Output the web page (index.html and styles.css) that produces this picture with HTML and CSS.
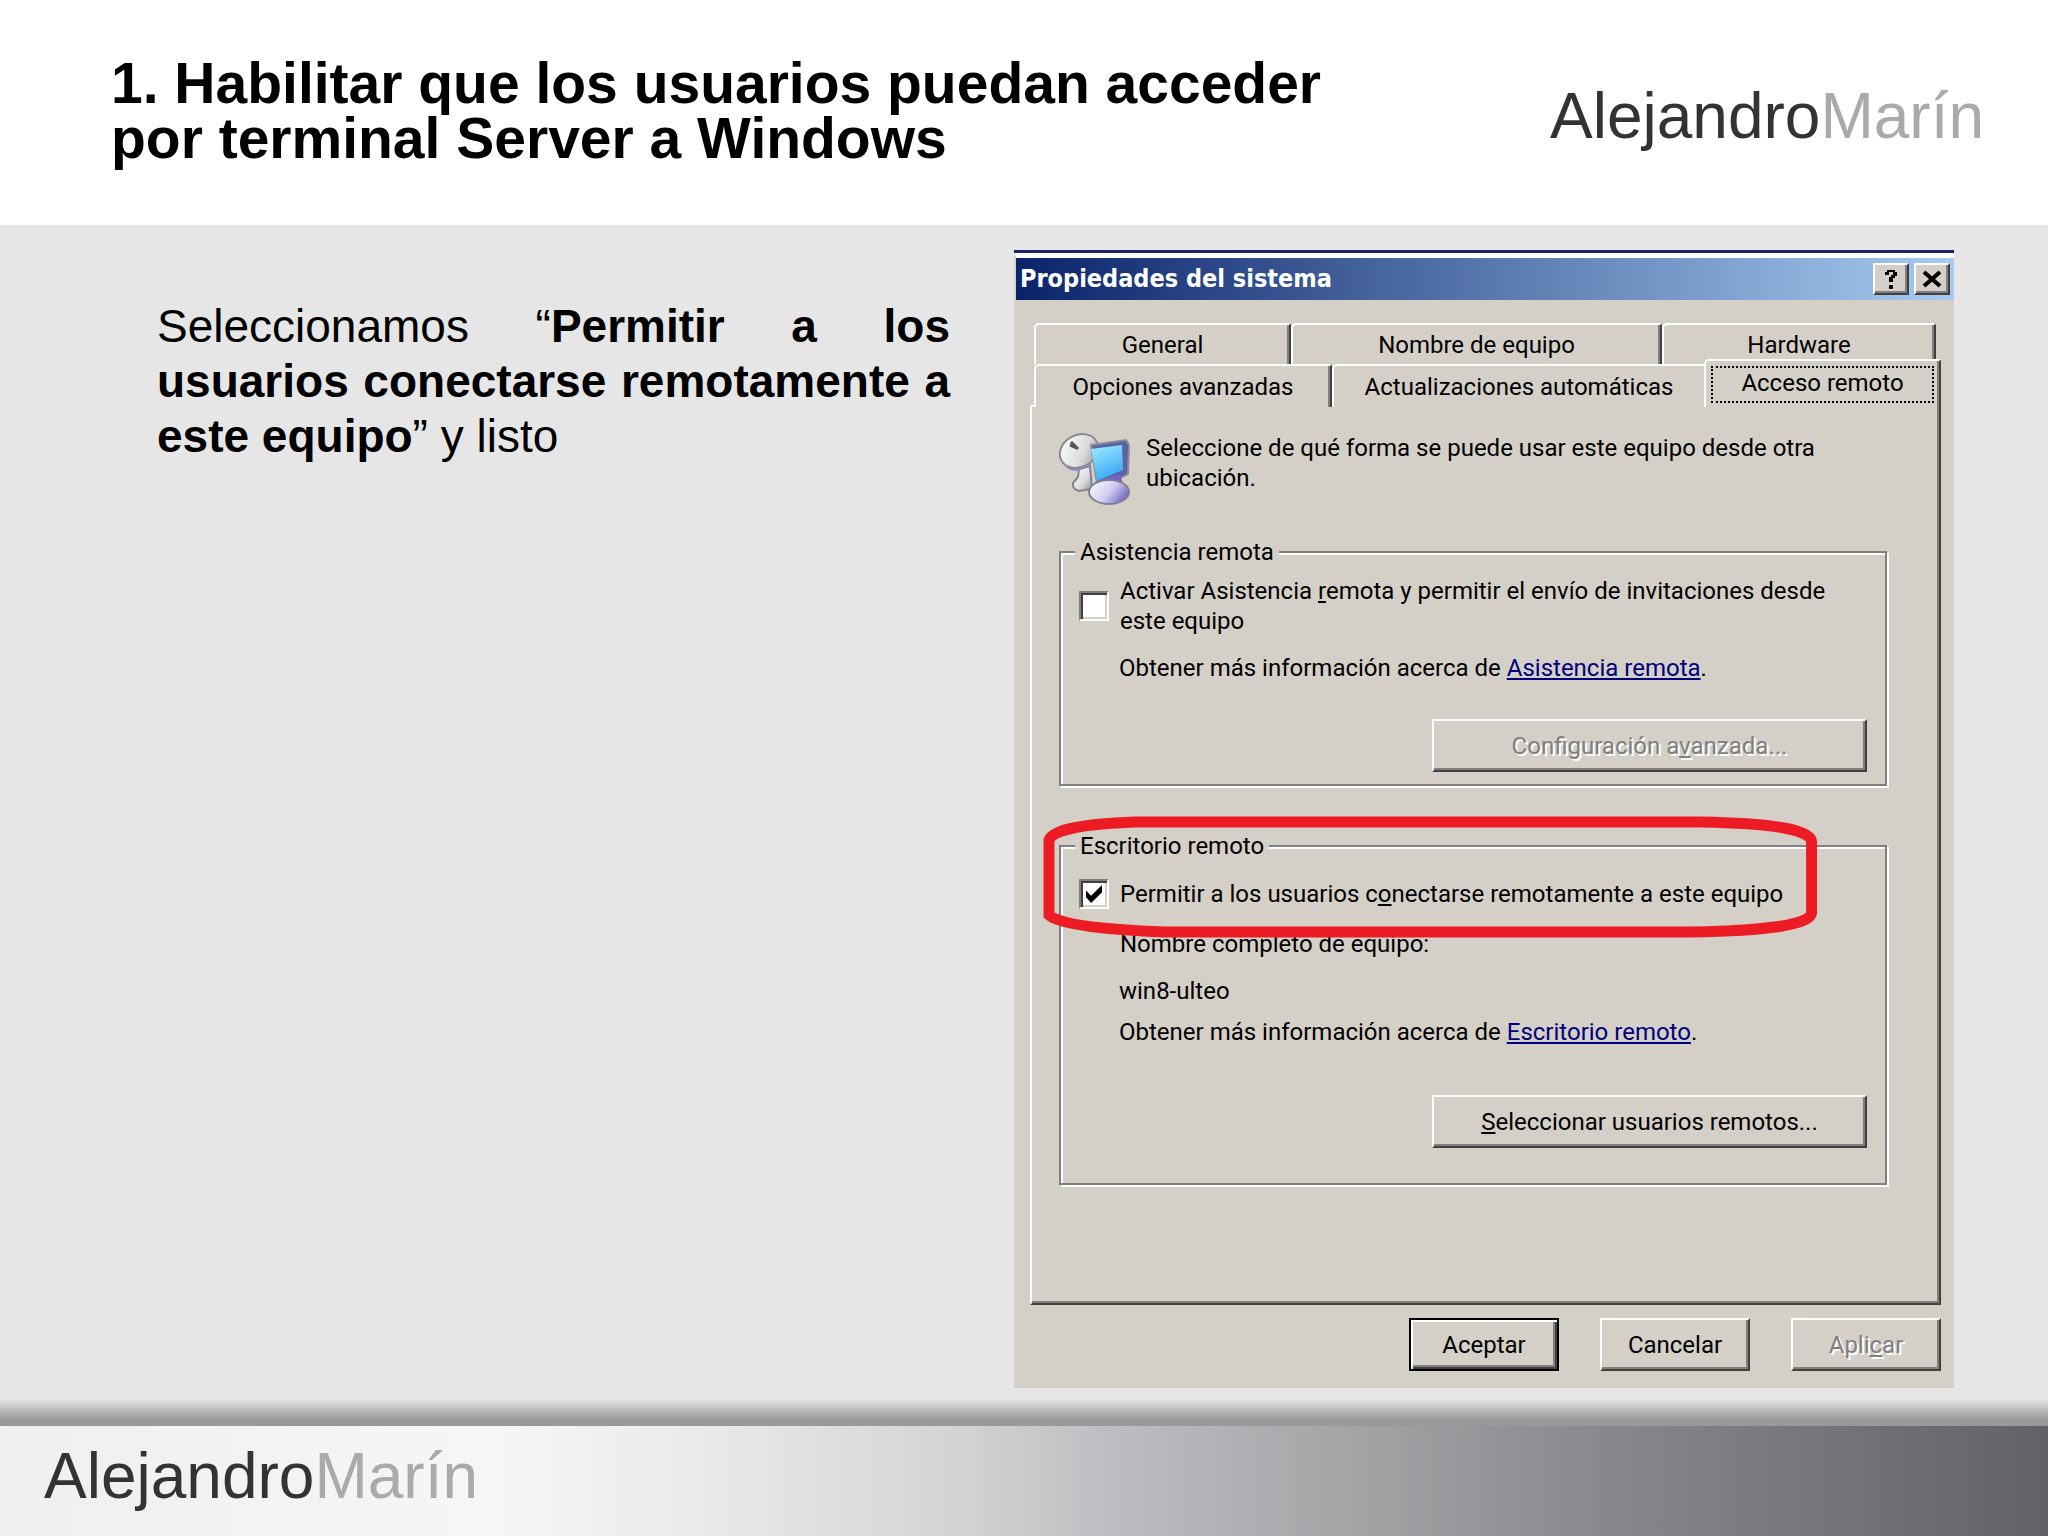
FILE: index.html
```
<!DOCTYPE html>
<html lang="es">
<head>
    <meta charset="UTF-8">
    <meta name="viewport" content="width=device-width, initial-scale=1.0">
    <title>Habilitar acceso por Terminal Server</title>
    <link rel="stylesheet" href="styles.css">
</head>
<body>
    <header class="header">
        <h1>1. Habilitar que los usuarios puedan acceder<br>por terminal Server a Windows</h1>
        <div class="logo">Alejandro<span>Marín</span></div>
    </header>

    <main class="content">
        <p class="text">Seleccionamos “<b>Permitir a los usuarios conectarse remotamente a este equipo</b>” y listo</p>

        <section class="dialog">
            <div class="titlebar">
                <h2>Propiedades del sistema</h2>
                <button class="title-btn" type="button" aria-label="Ayuda">
                    <svg width="16" height="22" viewBox="0 0 16 22"><path d="M2 7V4h2V2h8v2h2v4h-2v2h-2v4H6V9h2V7h2V4H6v3zM6 17h4v4H6z"/></svg>
                </button>
                <button class="title-btn" type="button" aria-label="Cerrar">
                    <svg width="20" height="18" viewBox="0 0 20 18"><path d="M2 2l16 14M18 2L2 16" stroke="#000" stroke-width="4"/></svg>
                </button>
            </div>

            <div class="body">
                <div class="tabs" role="tablist">
                    <div class="tab-row tab-row-back">
                        <button class="tab" type="button" role="tab">General</button>
                        <button class="tab" type="button" role="tab">Nombre de equipo</button>
                        <button class="tab" type="button" role="tab">Hardware</button>
                    </div>
                    <div class="tab-row tab-row-front">
                        <button class="tab" type="button" role="tab">Opciones avanzadas</button>
                        <button class="tab covered" type="button" role="tab">Actualizaciones automáticas</button>
                        <button class="tab active" type="button" role="tab" aria-selected="true"><span>Acceso remoto</span></button>
                    </div>
                </div>

                <div class="panel" role="tabpanel">
                    <div class="intro">
                        <svg class="icon" width="74" height="74" viewBox="0 0 74 74">
                            <defs>
                                <linearGradient id="dish" x1="0" y1="0" x2="1" y2="1">
                                    <stop offset="0" stop-color="#fff"/>
                                    <stop offset="0.6" stop-color="#dcdcdc"/>
                                    <stop offset="1" stop-color="#8e8e9c"/>
                                </linearGradient>
                                <linearGradient id="screen" x1="0" y1="0" x2="0.4" y2="1">
                                    <stop offset="0" stop-color="#a4ecff"/>
                                    <stop offset="1" stop-color="#38aaf4"/>
                                </linearGradient>
                                <linearGradient id="base" x1="0" y1="0" x2="1" y2="0.5">
                                    <stop offset="0" stop-color="#fff"/>
                                    <stop offset="0.6" stop-color="#d2cff0"/>
                                    <stop offset="1" stop-color="#7a74c8"/>
                                </linearGradient>
                            </defs>
                            <path d="M20 36L31 33 33 56 20 58Q13 56 14 50L19 44Z" fill="url(#dish)" stroke="#85838e" stroke-width="2"/>
                            <path d="M4 27Q6 38 17 38L30 34 33 25 20 30Z" fill="#8f89c9"/>
                            <ellipse cx="20" cy="18" rx="20" ry="16" transform="rotate(-28 20 18)" fill="url(#dish)" stroke="#8a8a8e" stroke-width="2"/>
                            <path d="M12 9L19 16M11 12l7 3" stroke="#55555c" stroke-width="3"/>
                            <path d="M32 12L67 7 70 12 69 41 58 47 38 50Z" fill="#5b62a5" stroke="#8b8b98" stroke-width="2"/>
                            <path d="M32 16L63 12 64 37 38 48Z" fill="url(#screen)"/>
                            <path d="M45 45L61 41 65 54 41 54Z" fill="#7065c4"/>
                            <ellipse cx="50" cy="59" rx="20" ry="12" fill="url(#base)" stroke="#80808e" stroke-width="2"/>
                        </svg>
                        <p>Seleccione de qué forma se puede usar este equipo desde otra<br>ubicación.</p>
                    </div>

                    <fieldset class="group">
                        <legend>Asistencia remota</legend>
                        <div class="option">
                            <input type="checkbox" id="asistencia">
                            <label for="asistencia">Activar Asistencia <u>r</u>emota y permitir el envío de invitaciones desde<br>este equipo</label>
                        </div>
                        <p class="info">Obtener más información acerca de <a href="#">Asistencia remota</a>.</p>
                        <button class="btn wide" type="button" disabled>Configuración a<u>v</u>anzada...</button>
                    </fieldset>

                    <fieldset class="group desktop">
                        <legend>Escritorio remoto</legend>
                        <div class="option">
                            <input type="checkbox" id="escritorio" checked>
                            <label for="escritorio">Permitir a los usuarios c<u>o</u>nectarse remotamente a este equipo</label>
                        </div>
                        <p class="name">Nombre completo de equipo:</p>
                        <p class="host">win8-ulteo</p>
                        <p class="info">Obtener más información acerca de <a href="#">Escritorio remoto</a>.</p>
                        <button class="btn wide" type="button"><u>S</u>eleccionar usuarios remotos...</button>
                        <svg class="mark" viewBox="0 0 776 124" preserveAspectRatio="none">
                            <path d="M6 24Q12 9 92 6H660Q770 8 770 26V97Q768 114 650 116H122Q20 112 6 99Z"/>
                        </svg>
                    </fieldset>
                </div>

                <div class="actions">
                    <button class="btn default" type="button">Aceptar</button>
                    <button class="btn" type="button">Cancelar</button>
                    <button class="btn" type="button" disabled>Apli<u>c</u>ar</button>
                </div>
            </div>
        </section>
    </main>

    <div class="shadow"></div>
    <footer class="footer">
        <div class="logo">Alejandro<span>Marín</span></div>
    </footer>
</body>
</html>
```
FILE: styles.css
```
* {
    box-sizing: border-box;
}
body {
    margin: 0;
    min-height: 100vh;
    display: flex;
    flex-direction: column;
    font-family: "Liberation Sans", Arial, sans-serif;
    background: #e6e6e6;
    color: #000;
}
h1, h2, p {
    margin: 0;
}
.header {
    display: flex;
    justify-content: space-between;
    align-items: flex-start;
    padding: 56px 64px 59px 111px;
    background: #fff;
}
h1 {
    font-size: 57px;
    line-height: 55px;
}
.logo {
    font-size: 64px;
    line-height: 64px;
    color: #333;
}
.header .logo {
    margin-top: 28px;
}
.logo span {
    color: #aaa;
}
.content {
    flex: 1;
    display: grid;
    grid-template-columns: 793fr 940fr;
    gap: 64px;
    align-items: start;
    padding: 25px 94px 11px 157px;
}
.text {
    margin-top: 49px;
    font-size: 46px;
    line-height: 55px;
    text-align: justify;
}

/* dialog window */
.dialog {
    font-family: Roboto, "Liberation Sans", sans-serif;
    font-size: 24px;
    line-height: 30px;
    background: #d4d0c8;
    border-top: 3px solid #1a2460;
}
.titlebar {
    display: flex;
    align-items: center;
    gap: 5px;
    height: 47px;
    padding: 0 4px;
    border-top: 5px solid #fff;
    border-left: 2px solid #d4d0c8;
    background: linear-gradient(90deg, #0a246a, #a6caf0) padding-box;
}
h2 {
    flex: 1;
    font-family: "DejaVu Sans Condensed", "DejaVu Sans", sans-serif;
    font-size: 25px;
    color: #fff;
}
.title-btn, .btn {
    font: inherit;
    color: #000;
    background: #d4d0c8;
    border: 2px solid;
    border-color: #fff #404040 #404040 #fff;
    box-shadow: inset -2px -2px #808080;
}
.title-btn {
    display: flex;
    align-items: center;
    justify-content: center;
    width: 36px;
    height: 32px;
    padding: 0;
}
.body {
    padding: 23px 13px 17px 16px;
}

/* tabs */
.tab-row {
    display: grid;
    height: 41px;
    padding-left: 4px;
}
.tab-row-back {
    grid-template-columns: 257fr 371fr 274fr;
    padding-right: 5px;
}
.tab-row-front {
    grid-template-columns: 298fr 372fr 237fr;
}
.tab {
    padding: 0;
    font: inherit;
    color: #000;
    background: #d4d0c8;
    border: 2px solid;
    border-color: #fff #404040 #fff #fff;
    border-bottom: 0;
    border-radius: 5px 3px 0 0;
    box-shadow: inset -2px 0 #808080;
}
.tab.covered {
    border-right: 0;
    border-radius: 5px 0 0 0;
    box-shadow: none;
}
.tab.active {
    position: relative;
    height: 48px;
    margin-top: -5px;
    padding: 5px;
}
.tab.active span {
    display: block;
    height: 37px;
    border: 2px dotted #000;
}
.panel {
    padding: 26px 50px 118px 27px;
    border: 2px solid;
    border-color: #fff #404040 #404040 #fff;
    box-shadow: inset -2px -2px #808080;
}
.intro {
    display: flex;
    gap: 13px;
}
.icon {
    flex: none;
}

/* groups */
.group {
    min-width: 0;
    margin: 30px 2px 0 0;
    padding: 9px 18px 12px;
    border: 2px solid #808080;
    box-shadow: 2px 2px #fff, inset 2px 2px #fff;
}
.desktop {
    position: relative;
    margin-top: 45px;
    padding-top: 18px;
    padding-bottom: 35px;
}
legend {
    margin-left: -4px;
    padding: 0 5px;
    background: #d4d0c8;
}
.option {
    display: flex;
    align-items: center;
    gap: 11px;
}
.option input {
    appearance: none;
    flex: none;
    width: 30px;
    height: 30px;
    margin: 0;
    border: 2px solid;
    border-color: #808080 #fff #fff #808080;
    background: #fff;
    box-shadow: inset 2px 2px #404040, inset -2px -2px #d4d0c8;
}
.option input:checked::before {
    content: "";
    display: block;
    width: 16px;
    height: 18px;
    margin: 4px 5px;
    background: #000;
    clip-path: polygon(0 30%, 32% 60%, 100% 0, 100% 40%, 32% 100%, 0 68%);
}
.info {
    margin-top: 17px;
    padding-left: 40px;
}
.name {
    margin-top: 20px;
    padding-left: 41px;
}
.host {
    margin-top: 17px;
    padding-left: 40px;
}
.desktop .info {
    margin-top: 11px;
}
a {
    color: #00007b;
}
.mark {
    position: absolute;
    left: -18px;
    top: -45px;
    width: 94%;
    height: 124px;
    pointer-events: none;
}
.mark path {
    fill: none;
    stroke: #ed1c24;
    stroke-width: 11;
}

/* buttons */
.btn {
    width: 150px;
    height: 53px;
    padding: 0;
}
.btn.wide {
    display: block;
    width: 435px;
    margin: 36px 0 0 auto;
}
.desktop .btn.wide {
    margin-top: 48px;
}
.btn.default {
    border-color: #000;
    box-shadow: inset 2px 2px #fff, inset -2px -2px #404040, inset -4px -4px #808080;
}
.btn:disabled {
    color: #808080;
    text-shadow: 2px 2px #fff;
}
.actions {
    display: flex;
    justify-content: flex-end;
    gap: 41px;
    margin-top: 13px;
}

/* footer */
.shadow {
    height: 27px;
    background: linear-gradient(#e6e6e6, #999 75%, #999);
}
.footer {
    height: 111px;
    padding: 18px 44px;
    background: linear-gradient(90deg, #efefef, #f6f6f6 24%, #eaeaea 34%, #d3d3d3 47%, #bfbdc1 54%, #a4a3a6 66%, #87868a 79%, #636165);
}
```
